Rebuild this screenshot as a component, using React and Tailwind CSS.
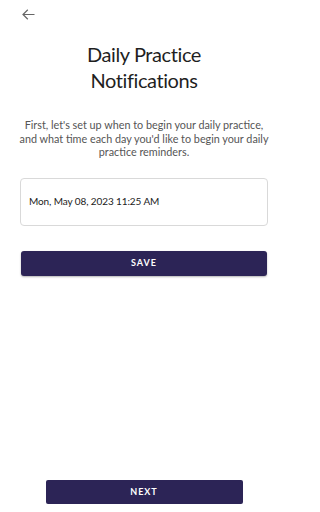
import React from "react";

export default function App() {
  return (
    <div
      className="w-[288px] h-[512px] bg-white flex flex-col text-[#222]"
      style={{ fontFamily: "Lato, 'Noto Sans', sans-serif" }}
    >
      <div className="pl-[22px] pt-[9px] h-[24px]">
        <svg width="13" height="11" viewBox="0 0 13 11" fill="none" stroke="#666" strokeWidth="1.2">
          <path d="M12.5 5.5H1M5.8 0.8L1 5.5l4.8 4.7" />
        </svg>
      </div>
      <h1 className="mt-[17px] text-center text-[20px] leading-[26px] tracking-[-0.4px] font-normal text-[#1f1f1f]">
        Daily Practice
        <br />
        Notifications
      </h1>
      <p className="mt-[25px] px-[10px] text-center text-[10.8px] leading-[13.5px] text-[#555] whitespace-nowrap">
        First, let's set up when to begin your daily practice,
        <br />
        and what time each day you'd like to begin your daily
        <br />
        practice reminders.
      </p>
      <div className="mt-[19px] mx-[20px] h-[48px] border border-[#d9d9d9] rounded-[4px] flex items-center px-[8px] text-[10px] tracking-[-0.1px] text-[#222]">
        Mon, May 08, 2023 11:25 AM
      </div>
      <button className="mt-[25px] mx-[21px] h-[25px] rounded-[3px] bg-[#2c2456] text-white text-[9px] font-bold tracking-[1px] shadow-[0_1px_2px_rgba(0,0,0,0.3)]">
        SAVE
      </button>
      <div className="mt-auto mb-[8px] flex justify-center">
        <button className="w-[197px] h-[24px] rounded-[2px] bg-[#2c2456] text-white text-[9px] font-bold tracking-[1px]">
          NEXT
        </button>
      </div>
    </div>
  );
}
